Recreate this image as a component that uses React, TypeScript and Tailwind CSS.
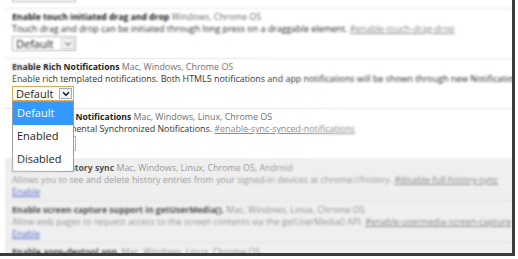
import { ChevronDown } from 'lucide-react';

type Flag = {
  title: string;
  platforms: string;
  desc?: string;
  tag?: string;
  kind: 'select' | 'focused' | 'enable' | 'none';
};

const active: Flag[] = [
  {
    title: 'Enable touch initiated drag and drop',
    platforms: 'Windows, Chrome OS',
    desc: 'Touch drag and drop can be initiated through long press on a draggable element.',
    tag: '#enable-touch-drag-drop',
    kind: 'select',
  },
  {
    title: 'Enable Rich Notifications',
    platforms: 'Mac, Windows, Chrome OS',
    desc: 'Enable rich templated notifications. Both HTML5 notifications and app notifications will be shown through new Notification Center.',
    kind: 'focused',
  },
  {
    title: 'Enable Synced Notifications',
    platforms: 'Mac, Windows, Linux, Chrome OS',
    desc: 'Enable experimental Synchronized Notifications.',
    tag: '#enable-sync-synced-notifications',
    kind: 'select',
  },
];

const unavailable: Flag[] = [
  {
    title: 'Disable full history sync',
    platforms: 'Mac, Windows, Linux, Chrome OS, Android',
    desc: 'Allows you to see and delete history entries from your signed-in devices at chrome://history.',
    tag: '#disable-full-history-sync',
    kind: 'enable',
  },
  {
    title: 'Enable screen capture support in getUserMedia().',
    platforms: 'Mac, Windows, Linux, Chrome OS',
    desc: 'Allow web pages to request access to the screen contents via the getUserMedia() API.',
    tag: '#enable-usermedia-screen-capture',
    kind: 'enable',
  },
  {
    title: 'Enable apps-devtool app.',
    platforms: 'Mac, Windows, Linux, Chrome OS',
    kind: 'none',
  },
];

function Select({ focused = false }: { focused?: boolean }) {
  return (
    <div
      className={`relative flex h-[15px] items-center bg-white border ${
        focused ? 'w-[62px] border-[#e0a94a]' : 'w-[64px] border-[#b5b5b5]'
      }`}
    >
      <span className="pl-[3px] text-[11px] leading-none text-[#222]">Default</span>
      <span
        className={`ml-auto mr-[1px] flex h-[11px] w-[13px] items-center justify-center border ${
          focused ? 'border-[#9ab0c6] bg-[#f3f6f9]' : 'border-[#cfcfcf] bg-[#f4f4f4]'
        }`}
      >
        <ChevronDown
          className={`h-[10px] w-[10px] ${focused ? 'text-[#222]' : 'text-[#888]'}`}
          strokeWidth={focused ? 4 : 3}
        />
      </span>
    </div>
  );
}

function Dropdown() {
  return (
    <div className="absolute left-0 top-[15px] z-10 w-[62px] border border-[#9a9a9a] bg-white text-[11px] text-[#222]">
      <div className="flex h-[23px] items-center bg-[#3399ff] pl-[4px] text-white">Default</div>
      <div className="flex h-[23px] items-center pl-[4px]">Enabled</div>
      <div className="flex h-[23px] items-center pl-[4px]">Disabled</div>
    </div>
  );
}

function ActiveRow({ flag }: { flag: Flag }) {
  return (
    <div className="h-[50px] border-t border-[#e6e6e6] pl-[7px] pt-[2px]">
      <div className="h-[12px] whitespace-nowrap leading-[12px]">
        <span className="text-[8.6px] font-bold text-[#222]">{flag.title}</span>{' '}
        <span className="text-[#707070]">{flag.platforms}</span>
      </div>
      <div className="h-[12px] whitespace-nowrap leading-[12px] text-[#333]">
        {flag.desc}{' '}
        {flag.tag && <span className="text-[#8a8a8a] underline">{flag.tag}</span>}
      </div>
      <div className="relative mt-[1px] w-fit">
        <Select focused={flag.kind === 'focused'} />
        {flag.kind === 'focused' && <Dropdown />}
      </div>
    </div>
  );
}

function UnavailableRow({ flag }: { flag: Flag }) {
  return (
    <div className="h-[42px] border-t border-[#e2e2e2] pl-[7px] pt-[3px] first:border-t-0 first:pt-[4px]">
      <div className="h-[12px] whitespace-nowrap leading-[12px]">
        <span className="text-[8.6px] font-bold text-[#555]">{flag.title}</span>{' '}
        <span className="text-[#999]">{flag.platforms}</span>
      </div>
      {flag.desc && (
        <div className="h-[12px] whitespace-nowrap leading-[12px] text-[#9a9a9a]">
          {flag.desc}{' '}
          <span className="text-[#8a8a8a] underline">{flag.tag}</span>
        </div>
      )}
      {flag.kind === 'enable' && (
        <div className="h-[11px] leading-[11px] text-[#5a6fd6] underline">Enable</div>
      )}
    </div>
  );
}

export default function App() {
  return (
    <div className="h-[259px] w-[518px] overflow-hidden bg-white">
      <div
        className="relative h-[256px] w-[515px] overflow-hidden border-b-[3px] border-r-[3px] border-[#3c3c3c] bg-white pl-[5px] text-[8.9px] [font-family:'Open_Sans',sans-serif]"
      >
        <div className="-mt-[13px] h-[21px] pl-[7px]">
          <Select />
        </div>
        {active.map((f) => (
          <ActiveRow key={f.title} flag={f} />
        ))}
        <div className="bg-[#efefef]">
          {unavailable.map((f) => (
            <UnavailableRow key={f.title} flag={f} />
          ))}
        </div>
        <div className="pointer-events-none absolute inset-0 z-20 backdrop-blur-[0.8px] [mask-image:radial-gradient(ellipse_210px_80px_at_140px_118px,transparent_70%,black_100%)]" />
      </div>
    </div>
  );
}
